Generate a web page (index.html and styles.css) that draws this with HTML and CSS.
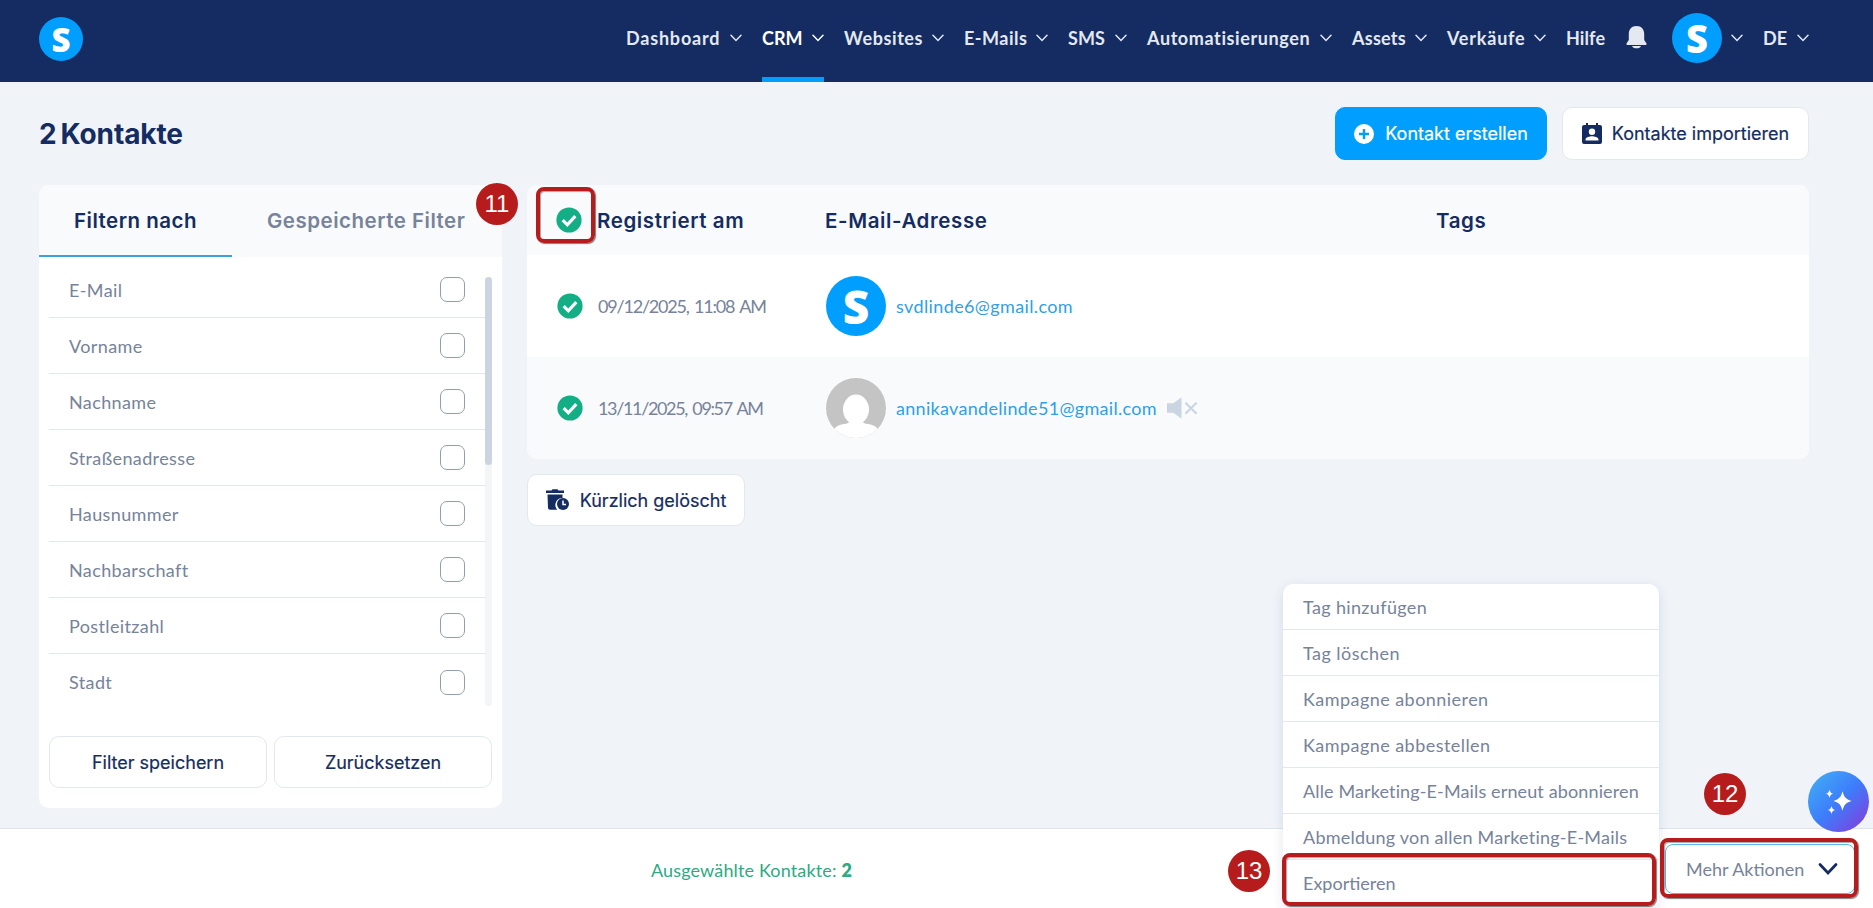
FILE: index.html
```html
<!DOCTYPE html>
<html lang="de">
<head>
  <meta charset="UTF-8" />
  <meta name="viewport" content="width=device-width, initial-scale=1.0" />
  <title>Kontakte</title>
  <link rel="stylesheet" href="styles.css">
</head>
<body>
  <svg class="defs" width="0" height="0">
    <symbol id="chev" viewBox="0 0 12 8"><path d="M1 1.2l5 5.2 5-5.2" fill="none" stroke="currentColor" stroke-width="1.5" stroke-linecap="round"/></symbol>
    <symbol id="check" viewBox="0 0 26 26"><circle cx="13" cy="13" r="12.6" fill="#13ae85"/><path d="M6.7 13.2l4.6 4.6 8-8.6" fill="none" stroke="#fff" stroke-width="3.2"/></symbol>
  </svg>

  <header class="topbar">
    <a class="logo" href="#">S</a>
    <nav class="nav">
      <a class="n1">Dashboard<svg class="chev"><use href="#chev"/></svg></a>
      <a class="n2 active">CRM<svg class="chev"><use href="#chev"/></svg></a>
      <a class="n3">Websites<svg class="chev"><use href="#chev"/></svg></a>
      <a class="n4">E-Mails<svg class="chev"><use href="#chev"/></svg></a>
      <a class="n5">SMS<svg class="chev"><use href="#chev"/></svg></a>
      <a class="n6">Automatisierungen<svg class="chev"><use href="#chev"/></svg></a>
      <a class="n7">Assets<svg class="chev"><use href="#chev"/></svg></a>
      <a class="n8">Verkäufe<svg class="chev"><use href="#chev"/></svg></a>
      <a class="n9">Hilfe</a>
      <a class="bell"><svg width="21" height="24" viewBox="0 0 21 24"><path d="M10.500 1C5.500 1 2.800 4.400 2.800 9v6L.6 18.200c-.4.900 0 1.800 1 1.800h17.800c1 0 1.400-.9 1-1.800L18.200 15V9c0-4.600-2.700-8-7.700-8z" fill="#e3e8f1"/><path d="M6 21h9c-.6 1.800-2 2.300-4.500 2.300S6.600 22.800 6 21z" fill="#e3e8f1"/></svg></a>
      <a class="user"><span class="avatar-s">S</span><svg class="chev"><use href="#chev"/></svg></a>
      <a class="lang">DE<svg class="chev"><use href="#chev"/></svg></a>
    </nav>
  </header>

  <main class="page">
    <div class="page-head">
      <h1>2 Kontakte</h1>
      <div class="actions">
        <button class="btn primary">
          <svg width="20" height="20" viewBox="0 0 20 20"><circle cx="10" cy="10" r="10" fill="#fff"/><path d="M10 5v10M5 10h10" stroke="#009fff" stroke-width="2.400"/></svg>
          <span>Kontakt erstellen</span>
        </button>
        <button class="btn import">
          <svg width="20" height="22" viewBox="0 0 20 22"><path fill="#142c62" fill-rule="evenodd" d="M4 0h2v2h8V0h2v2h2a2 2 0 0 1 2 2v15a2 2 0 0 1-2 2H2a2 2 0 0 1-2-2V4a2 2 0 0 1 2-2h2zM10 5.500a3.200 3.200 0 1 0 0 6.400 3.200 3.200 0 0 0 0-6.400zM3.500 17.500h13v-1c0-2.200-4.300-3.300-6.500-3.300s-6.500 1.100-6.500 3.300z"/></svg>
          <span>Kontakte importieren</span>
        </button>
      </div>
    </div>

    <div class="cols">
      <section class="filters">
        <div class="tabs">
          <div class="tab on">Filtern nach</div>
          <div class="tab">Gespeicherte Filter</div>
        </div>
        <div class="filter-body">
          <ul class="filter-list">
            <li>E-Mail<span class="box"></span></li>
            <li>Vorname<span class="box"></span></li>
            <li>Nachname<span class="box"></span></li>
            <li>Straßenadresse<span class="box"></span></li>
            <li>Hausnummer<span class="box"></span></li>
            <li>Nachbarschaft<span class="box"></span></li>
            <li>Postleitzahl<span class="box"></span></li>
            <li>Stadt<span class="box"></span></li>
          </ul>
          <div class="scroll"><div class="thumb"></div></div>
        </div>
        <div class="filter-btns">
          <button class="btn">Filter speichern</button>
          <button class="btn reset">Zurücksetzen</button>
        </div>
      </section>

      <section class="contacts">
        <div class="table">
          <div class="row head">
            <svg class="check"><use href="#check"/></svg>
            <div class="th-reg">Registriert am</div>
            <div class="th-mail">E-Mail-Adresse</div>
            <div class="th-tags">Tags</div>
          </div>
          <div class="row">
            <svg class="check"><use href="#check"/></svg>
            <div class="date">09/12/2025, 11:08 AM</div>
            <div class="mail">
              <span class="avatar-s">S</span>
              <a class="mail1">svdlinde6@gmail.com</a>
            </div>
          </div>
          <div class="row alt">
            <svg class="check"><use href="#check"/></svg>
            <div class="date date2">13/11/2025, 09:57 AM</div>
            <div class="mail">
              <svg class="ghost" viewBox="0 0 60 60"><clipPath id="c"><circle cx="30" cy="30" r="30"/></clipPath><g clip-path="url(#c)"><path d="M0 0h60v60H0z" fill="#c4c4c4"/><ellipse cx="30" cy="31.500" rx="13" ry="15" fill="#fff"/><path d="M5 60c1-9 6-13.500 13-14q5-.5 6-3h12q1 2.500 6 3c7 .5 12 5 13 14z" fill="#fff"/></g></svg>
              <a class="mail2">annikavandelinde51@gmail.com</a>
              <svg class="mute" viewBox="0 0 32 22"><path d="M0 6h6.500L15 0v22l-8.500-6H0z" fill="#cbd5e1"/><path d="M19 5.500l11.500 11.500M30.500 5.500L19 17" stroke="#cbd5e1" stroke-width="2.200"/></svg>
            </div>
          </div>
        </div>
        <button class="btn deleted">
          <svg width="23" height="22" viewBox="0 0 23 22"><path d="M0 1.600h5.500L6.500.2h5l1 1.400H18v2.400H0z" fill="#142c62"/><path d="M1.500 5.500h15V9a7 7 0 0 0-5.300 11.700H4a2 2 0 0 1-2-1.700z" fill="#142c62"/><circle cx="17" cy="15" r="6" fill="#142c62"/><path d="M17 11.500v4h3" fill="none" stroke="#fff" stroke-width="1.500"/></svg>
          <span>Kürzlich gelöscht</span>
        </button>
      </section>
    </div>
  </main>

  <footer class="selbar">
    <div class="count">Ausgewählte Kontakte: <b>2</b></div>
    <button class="more"><span>Mehr Aktionen</span><svg width="20" height="14" viewBox="0 0 20 14"><path d="M2 2.500l8 8.500 8-8.500" fill="none" stroke="#142c62" stroke-width="2.800" stroke-linecap="round"/></svg></button>
  </footer>

  <ul class="menu">
    <li><span class="m1">Tag hinzufügen</span></li>
    <li><span class="m2">Tag löschen</span></li>
    <li><span class="m3">Kampagne abonnieren</span></li>
    <li><span class="m4">Kampagne abbestellen</span></li>
    <li><span class="m5">Alle Marketing-E-Mails erneut abonnieren</span></li>
    <li><span class="m6">Abmeldung von allen Marketing-E-Mails</span></li>
    <li><span class="m7">Exportieren</span></li>
  </ul>

  <button class="ai"><svg width="30" height="30" viewBox="0 0 30 30" fill="#fff"><path d="M18.500 4.300c1.600 6 3.200 7.700 9 9.700-5.800 2-7.400 3.700-9 9.700-1.600-6-3.200-7.700-9-9.700 5.800-2 7.400-3.700 9-9.700z"/><path d="M5.500 2.800c.7 2.600 1.300 3.200 3.700 4-2.400.8-3 1.400-3.700 4-.7-2.600-1.300-3.200-3.700-4 2.400-.8 3-1.400 3.700-4z"/><path d="M7.500 19c.7 2.600 1.300 3.200 3.700 4-2.400.8-3 1.400-3.700 4-.7-2.600-1.300-3.200-3.700-4 2.400-.8 3-1.400 3.700-4z"/></svg></button>

  <!-- Schrittmarkierungen -->
  <div class="mark mark11"></div>
  <div class="mark mark12"></div>
  <div class="mark mark13"></div>
  <div class="step step11">11</div>
  <div class="step step12">12</div>
  <div class="step step13">13</div>
</body>
</html>
```
FILE: styles.css
```css
:root{--navy:#142c62;--blue:#009fff;--grey:#76839a;--line:#e3e8ee;--bg:#f0f4f9;--red:#b71c1c}
*{box-sizing:border-box}
body{margin:0;height:908px;position:relative;overflow:hidden;display:flex;flex-direction:column;background:var(--bg);color:var(--grey);font-family:Lato,"Open Sans",sans-serif;font-size:18px}
ul{list-style:none;margin:0;padding:0}
button{font:inherit;color:inherit}
.defs{position:absolute}

/* Kopfzeile */
.topbar{height:82px;flex:none;display:flex;justify-content:space-between;background:var(--navy);padding:0 64px 0 39px}
.logo,.avatar-s{display:flex;align-items:center;justify-content:center;border-radius:50%;background:var(--blue);color:#fff;font-family:"Open Sans",sans-serif;font-weight:800;text-decoration:none;line-height:1;flex:none}
.logo{width:44px;height:44px;margin-top:17px;font-size:33px}
.nav{display:flex;color:#e3e8f1;font-weight:700;font-size:18px;white-space:nowrap}
.nav a{display:flex;align-items:center;justify-content:space-between;height:82px;margin-right:20px;padding-bottom:6px}
.nav .chev{width:12px;height:8px;margin-top:-1px}
.nav .n1{width:116px;letter-spacing:.8px}
.nav .n2{width:62px}
.nav .n3{width:100px;letter-spacing:.6px}
.nav .n4{width:84px;letter-spacing:.5px}
.nav .n5{width:59px;letter-spacing:.1px}
.nav .n6{width:185px;letter-spacing:.6px}
.nav .n7{width:75px;letter-spacing:.25px}
.nav .n8{width:99px;letter-spacing:.8px}
.nav .n9{width:40px;letter-spacing:.1px}
.nav .active{color:#fff;border-bottom:5px solid var(--blue);padding-bottom:1px}
.nav .bell{margin-right:25px;padding-bottom:8px}
.nav .user{width:71px}
.nav .user .avatar-s{width:50px;height:50px;font-size:38px}
.nav .lang{width:46px;margin-right:0}

/* Seitenkopf */
.page{flex:1;padding:25px 64px 20px 39px}
.page-head{display:flex;justify-content:space-between;height:78px}
h1{margin:10px 0 0;font:700 28px/34px Inter,sans-serif;color:var(--navy);letter-spacing:-.1px;word-spacing:-2.500px}
.actions{display:flex;gap:15px}
.btn{display:flex;align-items:center;justify-content:center;height:53px;padding:0;border:1px solid var(--line);border-radius:10px;background:#fff;color:var(--navy);font:400 18px Inter,sans-serif;-webkit-text-stroke:.2px;white-space:nowrap}
.primary{width:212px;gap:11px;background:var(--blue);border-color:var(--blue);color:#fff}
.import{width:247px;gap:10px}

.cols{display:flex;gap:25px}
.filters{width:463px;height:623px;border-radius:10px;background:#fff;overflow:hidden}
.tabs{display:flex;height:72px;background:#f9fafc;font:600 20.5px Inter,sans-serif;letter-spacing:.5px}
.tab{display:flex;align-items:center;padding:0 35px 1px 35px;white-space:nowrap}
.tab.on{width:193px;padding:1px 0 0 35px;color:var(--navy);border-bottom:2px solid #3ba3dc}
.filter-body{display:flex;height:449px;padding:5px 10px 0}
.filter-list{width:436px}
.filter-list li{display:flex;align-items:center;justify-content:space-between;height:56px;padding:0 20px;border-bottom:1px solid var(--line);letter-spacing:.38px;line-height:20px}
.filter-list li:last-child{border:none}
.box{width:25px;height:25px;border:1px solid #929eb0;border-radius:7px}
.scroll{width:7px;height:429px;margin-top:15px;border-radius:4px;background:#f4f5f6}
.thumb{height:188px;border-radius:4px;background:#cbd5e1}
.filter-btns{display:flex;gap:7px;padding:30px 10px 0}
.filter-btns .btn{flex:1;height:52px}

/* Kontakttabelle */
.contacts{width:1282px}
.table{border-radius:10px;overflow:hidden;background:#fff}
.row{display:flex;align-items:center;height:102px;padding-left:30px}
.row.head{height:70px;padding:1px 0 0 29px;background:#f9fafc;font:600 20.5px Inter,sans-serif;letter-spacing:.6px;color:var(--navy)}
.row.alt{background:#f9fafc}
.check{width:26px;height:26px;flex:none}
.head .check{margin:-1px 15px 0 0}
.th-reg{width:228px}
.th-mail{width:611px}
.date{width:228px;margin-left:15px;letter-spacing:-1.200px;word-spacing:2px}
.date2{letter-spacing:-1.350px}
.mail{display:flex;align-items:center}
.mail .avatar-s{width:60px;height:60px;font-size:46px}
.ghost{width:60px;height:60px}
.mail a{margin-left:10px;color:#2f9fe8}
.mail1{letter-spacing:.38px}
.mail2{letter-spacing:.3px}
.mute{width:31px;height:22px;margin-left:10px}
.deleted{width:218px;height:52px;margin-top:15px;gap:11px}

/* Auswahlleiste */
.selbar{position:relative;height:80px;flex:none;display:flex;justify-content:space-between;border-top:1px solid #dde4ec;background:#fff}
.count{margin:30px 0 0 651px;color:#2fa982;letter-spacing:.15px}
.count b{font-weight:800}
.more{display:flex;align-items:center;gap:14px;width:190px;height:50px;margin:15px 18px 0 0;padding:0 0 0 20px;border:1px solid #59b8ee;border-radius:8px;background:#fff;white-space:nowrap}

.menu{position:absolute;left:1283px;top:584px;width:376px;border-radius:10px 10px 6px 6px;background:#fff;box-shadow:0 3px 12px rgba(20,44,98,.12)}
.menu li{display:flex;align-items:center;height:46px;padding-left:20px;border-bottom:1px solid var(--line);white-space:nowrap}
.menu li:last-child{border:none}
.m1{letter-spacing:.35px}
.m2{letter-spacing:.45px}
.m3{letter-spacing:.45px}
.m4{letter-spacing:.45px}
.m5{letter-spacing:.13px}
.m6{letter-spacing:.23px}

.ai{position:absolute;left:1808px;top:771px;width:61px;height:61px;display:flex;align-items:center;justify-content:center;padding:0;border:none;border-radius:50%;background:linear-gradient(135deg,#41a8f5 10%,#3d7dfb 50%,#7a45e0 90%)}

.mark{position:absolute;border:4px solid var(--red);border-radius:8px;box-shadow:1px 1px 1px rgba(0,0,0,.5),inset 1px 1px 1px rgba(0,0,0,.35)}
.mark11{left:536px;top:187px;width:59px;height:56px}
.mark12{left:1660px;top:838px;width:198px;height:60px}
.mark13{left:1282px;top:853px;width:374px;height:53px}
.step{position:absolute;width:42px;height:42px;border-radius:50%;background:var(--red);color:#fff;font:400 24px/41px "Liberation Sans",Arial,sans-serif;text-align:center}
.step11{left:476px;top:183px}
.step12{left:1704px;top:773px}
.step13{left:1228px;top:850px}
```
